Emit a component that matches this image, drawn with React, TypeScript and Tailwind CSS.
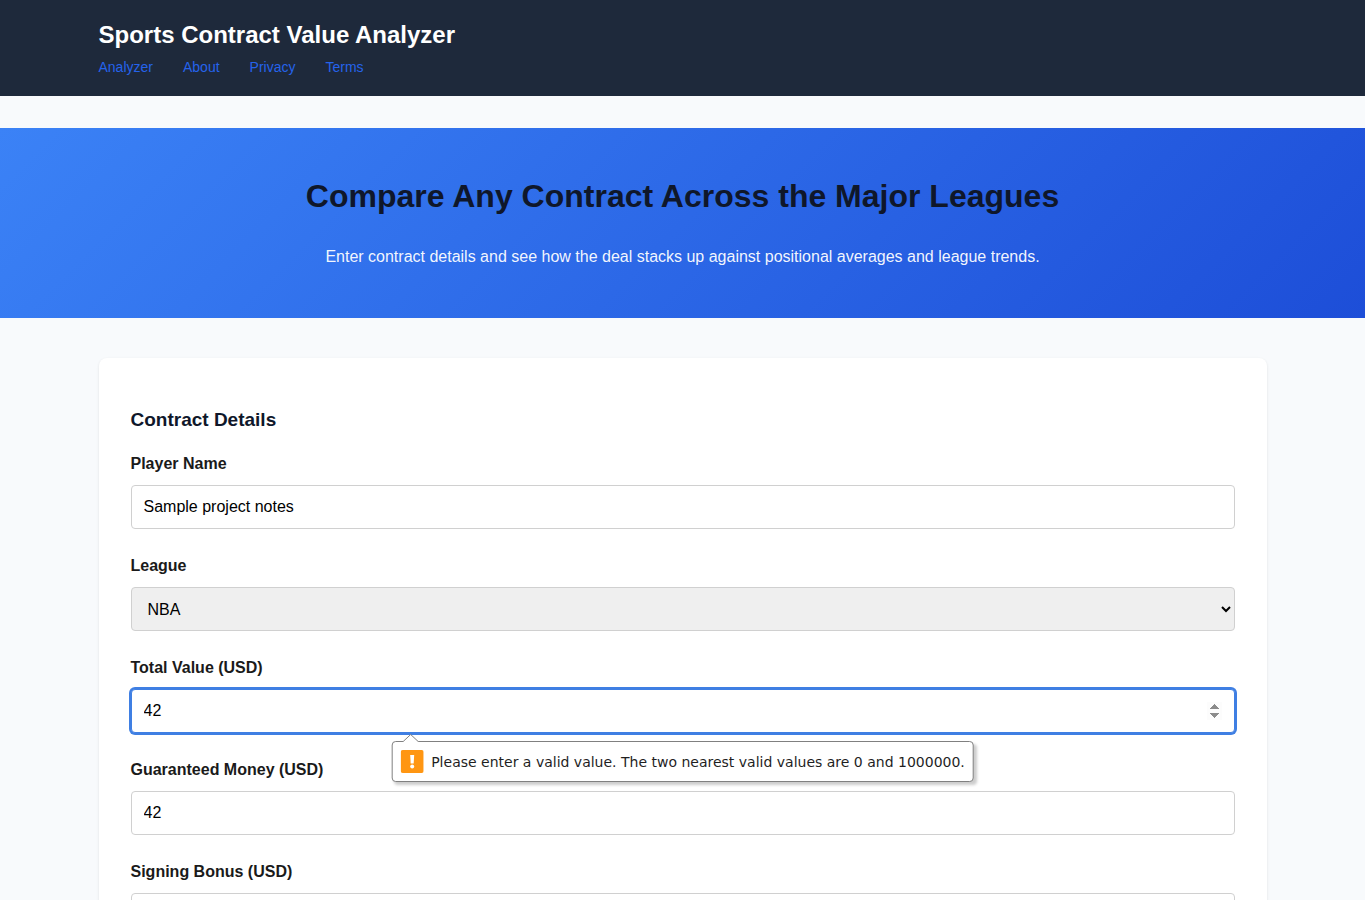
import { useState } from "react";

const navLinks = ["Analyzer", "About", "Privacy", "Terms"];
const leagues = ["NBA", "NFL", "MLB", "NHL"];

const fieldStyle =
  "block w-full h-11 rounded border border-[#d0d0d0] bg-white px-3 text-base text-black outline-none focus:border-[#3f7fe3] focus:ring-2 focus:ring-[#3f7fe3]";

const Header = () => {
  return (
    <header className="bg-[#1e293b] py-4">
      <div className="mx-auto max-w-[1200px] px-4">
        <div className="text-2xl leading-[38px] font-bold text-white">
          Sports Contract Value Analyzer
        </div>
        <nav className="flex gap-[30px] text-sm leading-[26px] text-[#2563eb]">
          {navLinks.map((link) => (
            <a key={link} href="#" className="hover:underline">
              {link}
            </a>
          ))}
        </nav>
      </div>
    </header>
  );
};

const Hero = () => {
  return (
    <section className="mt-8 bg-[linear-gradient(135deg,#3b82f6,#1d4ed8)] px-4 py-12 text-center">
      <h1 className="mb-7 text-[32px] leading-10 font-bold text-[#0f172a]">
        Compare Any Contract Across the Major Leagues
      </h1>
      <p className="text-base leading-[26px] text-white/95">
        Enter contract details and see how the deal stacks up against positional
        averages and league trends.
      </p>
    </section>
  );
};

const Field = ({
  id,
  label,
  children,
}: {
  id: string;
  label: string;
  children: React.ReactNode;
}) => {
  return (
    <div className="mb-6">
      <label htmlFor={id} className="mb-2 block leading-[26px] font-bold">
        {label}
      </label>
      {children}
    </div>
  );
};

const ValidationBubble = ({ message }: { message: string }) => {
  return (
    <div
      role="alert"
      className="absolute top-full left-1/2 z-10 mt-2 flex h-[41px] -translate-x-1/2 items-start gap-2 rounded border border-[#808080] bg-white px-2 pt-2 font-['DejaVu_Sans',sans-serif] text-sm leading-6 whitespace-nowrap text-[#1f1f1f] shadow-[3px_3px_3px_rgba(0,0,0,0.2)]"
    >
      <svg
        className="absolute -top-2 left-2.5"
        width="16"
        height="8"
        viewBox="0 0 16 8"
      >
        <path d="M0 8 L8 0.5 L16 8 Z" fill="#fff" />
        <path d="M0.5 7.5 L8 0.5 L15.5 7.5" fill="none" stroke="#808080" />
      </svg>
      <svg width="23" height="23" viewBox="0 0 23 23">
        <rect width="23" height="23" rx="2" fill="#ff9612" />
        <path d="M9.5 5 H13.5 L13 13.5 H10 Z" fill="#fff" />
        <circle cx="11.5" cy="16.5" r="2" fill="#fff" />
      </svg>
      <span>{message}</span>
    </div>
  );
};

export default function App() {
  const [player, setPlayer] = useState("Sample project notes");
  const [league, setLeague] = useState("NBA");
  const [total, setTotal] = useState("42");
  const [guaranteed, setGuaranteed] = useState("42");
  const [bonus, setBonus] = useState("42");

  return (
    <div className="min-h-screen bg-[#f8fafc] pb-10 font-['Liberation_Sans',Arial,sans-serif] text-[#1a1a1a]">
      <Header />
      <Hero />
      <main className="mx-auto mt-10 max-w-[1200px] px-4">
        <form className="rounded-lg bg-white p-8 shadow-[0_1px_3px_rgba(0,0,0,0.1)]">
          <h3 className="mt-[18px] mb-[19px] text-[19px] leading-6 font-bold text-[#0f172a]">
            Contract Details
          </h3>
          <Field id="player" label="Player Name">
            <input
              id="player"
              type="text"
              className={fieldStyle}
              value={player}
              onChange={(e) => setPlayer(e.target.value)}
            />
          </Field>
          <Field id="league" label="League">
            <select
              id="league"
              className="block h-11 w-full rounded border border-[#d0d0d0] bg-[#efefef] px-3 text-base text-black"
              value={league}
              onChange={(e) => setLeague(e.target.value)}
            >
              {leagues.map((name) => (
                <option key={name}>{name}</option>
              ))}
            </select>
          </Field>
          <Field id="total" label="Total Value (USD)">
            <div className="relative">
              <input
                id="total"
                type="number"
                step={1000000}
                min={0}
                autoFocus
                className={`${fieldStyle} [&::-webkit-inner-spin-button]:opacity-100`}
                value={total}
                onChange={(e) => setTotal(e.target.value)}
              />
              <ValidationBubble message="Please enter a valid value. The two nearest valid values are 0 and 1000000." />
            </div>
          </Field>
          <Field id="guaranteed" label="Guaranteed Money (USD)">
            <input
              id="guaranteed"
              type="number"
              className={fieldStyle}
              value={guaranteed}
              onChange={(e) => setGuaranteed(e.target.value)}
            />
          </Field>
          <Field id="bonus" label="Signing Bonus (USD)">
            <input
              id="bonus"
              type="number"
              className={fieldStyle}
              value={bonus}
              onChange={(e) => setBonus(e.target.value)}
            />
          </Field>
        </form>
      </main>
    </div>
  );
}
